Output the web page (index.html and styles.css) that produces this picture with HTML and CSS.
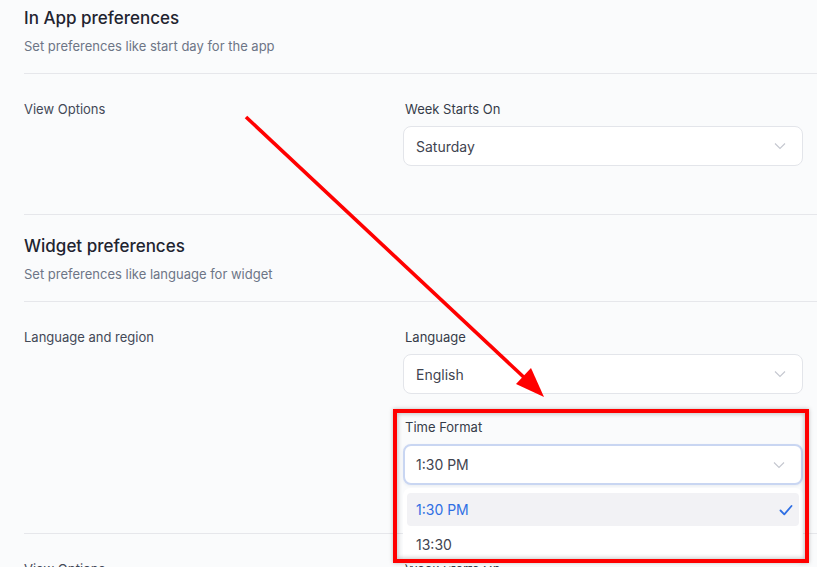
FILE: index.html
```html
<!DOCTYPE html>
<html lang="en">
  <head>
    <meta charset="UTF-8">
    <title>Preferences</title>
    <link rel="stylesheet" href="styles.css">
  </head>
  <body>
    <div class="page">
      <div class="section-head first">
        <h2 class="section-title">In App preferences</h2>
        <p class="section-sub">Set preferences like start day for the app</p>
      </div>
      <div class="row">
        <div class="row-label">View Options</div>
        <div class="row-fields">
          <div class="field">
            <label class="field-label">Week Starts On</label>
            <div class="select">
              <span>Saturday</span>
              <svg class="chevron" viewBox="0 0 12 8" width="12" height="8"><path d="M1 1.5l5 5 5-5" fill="none" stroke="#c4c7cf" stroke-width="1.1"/></svg>
            </div>
          </div>
        </div>
      </div>

      <div class="section-head">
        <h2 class="section-title">Widget preferences</h2>
        <p class="section-sub">Set preferences like language for widget</p>
      </div>
      <div class="row">
        <div class="row-label">Language and region</div>
        <div class="row-fields">
          <div class="field">
            <label class="field-label">Language</label>
            <div class="select">
              <span>English</span>
              <svg class="chevron" viewBox="0 0 12 8" width="12" height="8"><path d="M1 1.5l5 5 5-5" fill="none" stroke="#c4c7cf" stroke-width="1.1"/></svg>
            </div>
          </div>
          <div class="field">
            <label class="field-label">Time Format</label>
            <div class="select focused">
              <span>1:30 PM</span>
              <svg class="chevron" viewBox="0 0 12 8" width="12" height="8"><path d="M1 1.5l5 5 5-5" fill="none" stroke="#c4c7cf" stroke-width="1.1"/></svg>
              <div class="menu">
                <div class="option selected">
                  <span>1:30 PM</span>
                  <svg viewBox="0 0 14 12" width="14" height="12"><path d="M1.5 6.5l3.8 3.8L12.5 2" fill="none" stroke="#2f6fe4" stroke-width="1.8" stroke-linecap="round" stroke-linejoin="round"/></svg>
                </div>
                <div class="option">13:30</div>
              </div>
            </div>
          </div>
        </div>
      </div>
      <div class="row">
        <div class="row-label">View Options</div>
        <div class="row-fields">
          <div class="field">
            <label class="field-label">Week Starts On</label>
          </div>
        </div>
      </div>
    </div>

    <div class="highlight"></div>
    <svg class="arrow" width="817" height="567" viewBox="0 0 817 567">
      <line x1="246" y1="117" x2="530" y2="383" stroke="#ff0000" stroke-width="3.6"/>
      <polygon points="544,397 516,384 531,368" fill="#ff0000"/>
    </svg>
  </body>
</html>
```

FILE: styles.css
```css
html {
  background: #fafbfc;
}
body {
  margin: 0;
  height: 567px;
  overflow: hidden;
  font-family: Inter, "Noto Sans", sans-serif;
  color: #374151;
  position: relative;
}
.page {
  padding: 0 0 0 24px;
}
.section-head {
  padding: 19px 0 17px;
  border-bottom: 1px solid #e6e7eb;
}
.section-head.first {
  padding-top: 6px;
}
.section-title {
  margin: 0;
  font-size: 17px;
  line-height: 24px;
  font-weight: 500;
  color: #1f2430;
}
.section-sub {
  margin: 6px 0 0;
  font-size: 13px;
  line-height: 20px;
  color: #6d7586;
}
.row {
  display: flex;
  padding: 25px 0 48px;
  border-bottom: 1px solid #e6e7eb;
}
.row-label {
  width: 379px;
  font-size: 13px;
  line-height: 20px;
  color: #434957;
}
.row-fields {
  width: 400px;
  display: flex;
  flex-direction: column;
  gap: 23px;
}
.field-label {
  display: block;
  padding-left: 2px;
  font-size: 13px;
  line-height: 20px;
  color: #363c49;
  margin-bottom: 7px;
}
.select {
  position: relative;
  height: 38px;
  display: flex;
  align-items: center;
  justify-content: space-between;
  padding: 0 16px 0 12px;
  background: #fff;
  border: 1px solid #e3e5ea;
  border-radius: 8px;
  font-size: 14px;
  color: #3f4450;
}
.select.focused {
  border: 2px solid #c9d6f2;
  height: 37px;
  padding-left: 11px;
  box-shadow: 0 1px 3px rgba(30, 60, 120, 0.08);
}
.menu {
  position: absolute;
  left: -2px;
  right: -2px;
  top: 42px;
  background: #fff;
  padding: 5px 4px;
  border-radius: 8px;
  z-index: 2;
}
.option {
  height: 33px;
  display: flex;
  align-items: center;
  justify-content: space-between;
  padding: 0 6px 0 9px;
  border-radius: 4px;
  color: #3f4450;
}
.option.selected {
  background: #f2f2f5;
  color: #2f6fe4;
  margin-bottom: 2px;
}
.highlight {
  position: absolute;
  left: 393px;
  top: 409px;
  width: 408px;
  height: 146px;
  border: 4px solid #ff0000;
  box-shadow: inset 0 0 4px 1px rgba(0, 0, 0, 0.22), 0 0 4px rgba(0, 0, 0, 0.25);
  z-index: 3;
}
.arrow {
  position: absolute;
  left: 0;
  top: 0;
  z-index: 4;
}
```
